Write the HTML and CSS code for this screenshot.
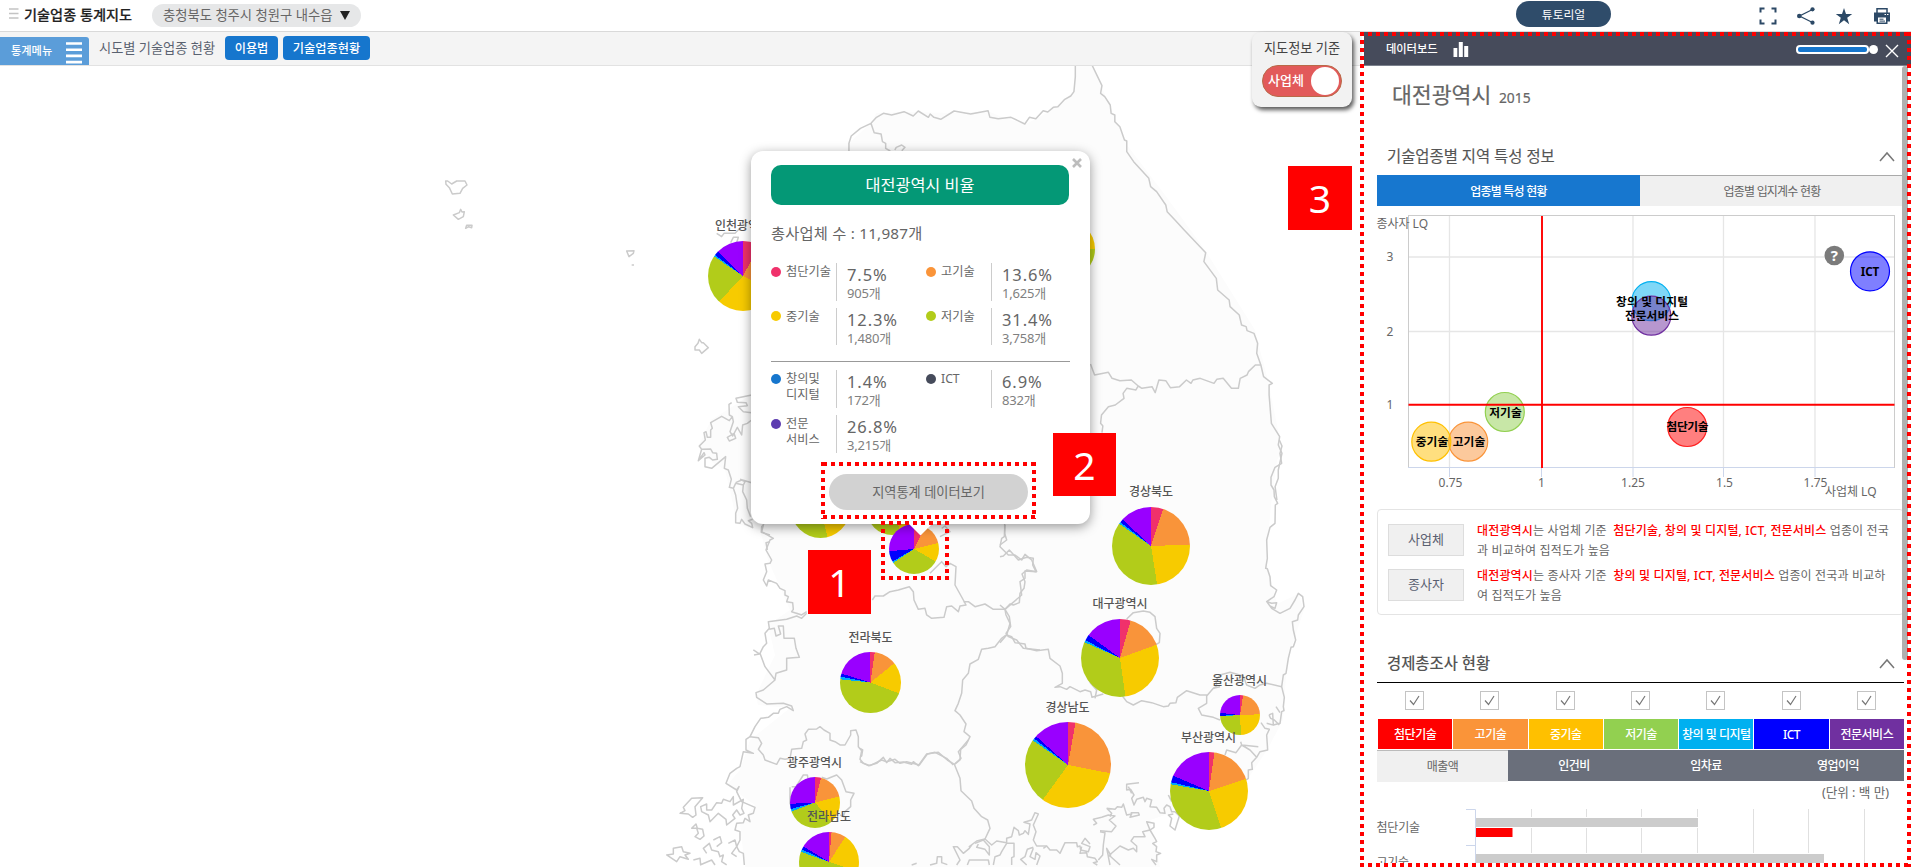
FILE: index.html
```html
<!DOCTYPE html>
<html lang="ko">
<head>
<meta charset="utf-8">
<title>기술업종 통계지도</title>
<link rel="stylesheet" href="styles.css">
</head>
<body>
<div class="app">
  <header class="topbar">
    <svg class="grip" width="10" height="12" viewBox="0 0 10 12"><path d="M0 1h9.500M0 5.500h9.500M0 10h9.500" stroke="#c4c4c4" stroke-width="1.600"/></svg>
    <h1 class="brand">기술업종 통계지도</h1>
    <div class="region-select"><span>충청북도 청주시 청원구 내수읍</span><svg width="10" height="9" viewBox="0 0 10 9"><path d="M0 0h10L5 9z" fill="#222"/></svg></div>
    <div class="tutorial">튜토리얼</div>
    <div class="tools">
      <svg width="18" height="18" viewBox="0 0 18 18"><path d="M1.500 5.500v-4h4M12.500 1.500h4v4M16.500 12.500v4h-4M5.500 16.500h-4v-4" fill="none" stroke="#2c4966" stroke-width="2"/></svg>
      <svg width="18" height="18" viewBox="0 0 18 18"><path d="M15.500 2.500L2.500 9l13 6.500" fill="none" stroke="#2c4966" stroke-width="1.300"/><circle cx="15.500" cy="2.300" r="2.100" fill="#2c4966"/><circle cx="2.300" cy="9" r="2.300" fill="#2c4966"/><circle cx="15.500" cy="15.700" r="2.100" fill="#2c4966"/></svg>
      <svg width="18" height="18" viewBox="0 0 18 18"><path d="M9 1l2 6h6.200l-5 3.800 2 6.400L9 13.200 3.800 17.200l2-6.400-5-3.800H7z" fill="#2c4966"/></svg>
      <svg width="18" height="18" viewBox="0 0 18 18"><path d="M4 6V1.700h10V6" fill="none" stroke="#2c4966" stroke-width="1.500"/><path d="M1 5.500h16V14.500h-2.500v2.500h-11v-2.500H1z" fill="#2c4966"/><path d="M5 10.500h8V15.500H5z" fill="#fff"/><path d="M6.500 12.200h4M6.500 14.100h5.500" stroke="#2c4966"/><path d="M11.500 7.500h1.500M14 7.500h1.500" stroke="#fff" stroke-width="1.200"/></svg>
    </div>
  </header>

  <div class="content">
    <main class="stage">
      <nav class="subbar">
        <div class="menu-tab"><span>통계메뉴</span><svg width="16" height="22" viewBox="0 0 16 22"><path d="M0 1.500h16M0 7.700h16M0 13.900h16M0 20.100h16" stroke="#fff" stroke-width="2.600"/></svg></div>
        <span class="crumb">시도별 기술업종 현황</span>
        <button class="btn b-guide">이용법</button><button class="btn b-status">기술업종현황</button>
      </nav>
      <div class="map">
        <svg class="land" width="1362" height="801" viewBox="0 66 1362 801">
          <path fill="#fcfcfc" d="M1075 66L1074 92 1049 112 1026 124 1004 118 988 111 954 113 910 112 876 113 871 123 849 143 849 300 800 390 750 395 735 405 711 420 698 447 712 462 725 470 730 490 737 524 760 530 768 560 790 610 768 625 775 655 756 695 758 705 790 708 750 740 740 770 727 785 755 805 740 825 745 867 1160 867 1150 820 1180 810 1247 780 1267 750 1283 720 1287 660 1304 610 1298 594 1277 604 1266 560 1271 505 1277 460 1282 450 1269 385 1255 330 1205 250 1165 195 1127 145 1103 90 1092 66z"/>
          <g class="coast" transform="translate(640 60) scale(.4592 .33333)">
            <path d="M948 17L948 50 945 95 938 108 925 118 910 140 900 142 888 156 878 152 862 176 848 172 838 192 808 172 780 176 762 172 758 152 720 162 684 153 655 178 640 172 632 162 628 172 606 153 595 168 575 155 548 165 530 160 515 172 503 190 480 205 460 228 455 250 455 275M503 190L510 218 525 222 528 245 535 250 535 265 545 273M555 270L558 262 570 255 577 262 570 272"/>
            <path d="M985 17L1006 77 1003 100 1012 110 1024 135 1026 160 1034 165 1034 185 1045 200 1055 240 1060 243 1060 275 1075 305 1108 355 1112 380 1125 395 1145 435 1148 455 1165 480 1185 510 1232 578 1228 605 1255 655 1258 690 1283 720 1285 740 1305 765 1310 795 1320 800 1322 812 1337 820 1345 850 1343 880 1352 915 1358 950 1377 970 1370 975 1370 1005 1375 1090 1393 1130 1390 1155 1398 1180 1390 1230 1390 1255 1383 1280 1387 1320"/>
            <path d="M981 912L990 945 1020 937 1028 955 1045 962 1070 960 1085 978 1080 990 1060 985 1052 1000 1054 1015 1035 1035 1020 1040 1005 1065 1003 1090 1008 1098 1006 1118M1085 978L1093 985 1115 980 1122 998 1130 960 1145 962 1155 983 1175 980 1190 960 1200 970 1204 960 1220 955 1250 970 1256 958 1270 955 1288 985 1303 985 1307 955 1322 945 1325 935 1340 915 1352 915"/>
          </g>
          <g class="coast" transform="translate(1000 440) scale(.33333)">
            <path d="M838 0L846 18 840 40 845 70 825 82 813 112 813 135 822 150 823 170 833 190 826 195 825 250 810 262 800 300 802 355 797 385 802 386 810 410 812 437 830 450 822 470 800 485 815 505 840 520 870 505 885 480 895 460 908 470 912 500 895 525 893 540 877 545 880 570 887 600 880 620 873 622 865 655 858 700 850 705 845 740 850 760 853 772 850 800 852 812 845 815 840 850 820 855 818 820 807 825M800 485L815 490 830 488 825 505 810 498M807 825L812 835 823 840 838 855M800 850L823 856"/>
            <path d="M14 250L14 280 20 300 0 315M0 350L10 348 28 330 55 360 80 352 100 355 98 375 108 395 80 390 66 402 75 425 72 445 60 460 58 488 40 495 30 492 15 508 18 525 30 550 20 585 0 608M0 495L15 508M20 585L35 590 45 608 75 612 78 625 110 632 145 628 150 655 180 678 187 700 187 730 165 742 180 740 200 748 210 740 240 755 255 750 272 755 276 772 310 762M365 765L380 785 400 795 425 782 455 788 490 800 505 798 510 790 528 788 532 772 560 752 600 765 620 765 620 790 595 805 605 825 640 832 660 840M620 768L640 745 650 738 648 720 660 705 690 697 730 708 740 735 765 745 780 735 800 730 845 740"/>
            <path d="M380 537L400 518 430 513 450 517 465 530 470 565 480 580 478 608 465 615M265 715L272 730 290 750 285 775"/>
            <path d="M660 740L640 745M783 848L795 865 808 868 800 885 803 930 780 935 770 952 750 930 725 915 722 905M675 945L680 930 708 938 725 915 775 920M770 952L755 968 757 988 745 990 745 1015 738 1020M828 800L840 818"/>
          </g>
          <g class="coast" transform="translate(860 740) scale(.33333)">
            <path d="M0 65L25 77 50 70 70 52 80 68 90 55 105 68 130 66 155 73 160 65 175 77 200 42 235 37 262 60 283 73 300 115 303 152 335 183 342 205 365 230 383 240 390 265 375 297M325 0L295 35 303 55 283 73M0 25L8 30 5 48 0 50"/>
            <path d="M155 375L170 370M210 375L230 370 232 350 245 350 245 368 262 374M290 375L300 360 280 320 292 320 310 340 328 325 335 315 328 320 350 303 375 297 395 315 410 303 440 308 440 295 455 290 462 262 475 272 478 285 490 280 495 272 505 283 510 252 492 247 515 240 525 218 535 222 520 255 528 275 520 300 530 318 560 318 570 330 590 330 600 340 615 308 650 308 652 320 660 318 662 330 685 335 690 320 665 310 675 295 690 312"/>
            <path d="M322 375L328 360 385 360 388 375M345 310L370 300 388 320 388 345 375 328 350 322 355 312M400 375L405 350 420 345 425 335 440 310 462 310 462 350 455 353 455 375M520 322L502 328 495 350 482 358 500 375M520 325L510 350 525 358 528 338 540 348 530 375M560 318L550 325"/>
            <path d="M665 320L660 340 680 338 682 350 705 355 712 365 700 368 712 375M720 275L735 278 730 315 728 345 715 360M750 375L745 350 752 345 740 325 745 348 780 318 805 330 820 325 830 335 830 318 813 303 822 290 855 290 848 275 870 270 860 245 882 250 882 262 870 270 885 295 890 305 878 310 890 320 888 335 902 340 890 345 890 365 875 358 888 375M750 348L780 375"/>
            <path d="M700 255L710 250 700 238 725 232 745 225 765 228 748 240 768 258 755 275 720 272M740 205L765 208 772 200 785 202 790 192 800 225 815 222 810 232 838 225 835 218 812 218M740 205L755 220 750 230"/>
            <path d="M837 128L800 133 800 150 812 148 822 165 815 175 822 195 830 178 850 172 855 185 860 175 875 180 870 200 890 202 900 218 915 220 912 205 920 195 930 200 935 215 945 215 958 228 945 270 930 258 935 235 925 225 940 222M925 165L935 185M805 140L815 160"/>
          </g>
          <g class="coast" transform="translate(640 500) scale(.33333)">
            <path d="M370 75L365 95 400 115 390 120 378 150 395 180 390 190 375 192 380 215 370 240 380 258 385 240 410 250 420 265 435 272 435 285 445 290 440 305 458 308 460 328 455 335 485 345 500 335M485 345L470 340M697 300L705 288 730 288 750 275 775 270 808 260 820 275 822 300 835 328 855 325 860 345 875 355 912 352 920 320 935 318 955 335 960 318 978 315 970 300 945 255 948 200 930 190 918 200 905 185 870 220M905 85L915 78 930 95 900 110M970 305L985 305 1005 320 1035 312 1060 328 1095 328M1095 75L1093 110 1085 115 1080 140 1090 150 1105 165 1125 165 1145 180 1155 163 1175 180 1190 215 1155 213 1155 235 1140 245 1145 285 1095 328 1108 350 1112 380 1098 400 1105 410 1130 420 1150 445 1200 450M1098 405L1085 415 1065 440 1045 445 1025 448 1015 478 990 492 985 520 968 540 965 580 955 610 945 632 960 645 978 672 972 695 990 710 978 735 962 748 960 780 945 792M940 795L920 775 885 757 862 762 838 795 800 785 780 790 765 778 740 785 725 780 690 797 670 790 660 778 665 752 655 740 655 710 648 690 632 692 632 705 615 735 600 735 585 725 570 720 570 700 552 690 540 680 530 687 505 688 495 702 500 720 490 725 485 745 455 748 450 775 435 778 420 775 410 793 375 780 370 765 355 748 365 730 355 713 330 710"/>
            <path d="M500 340L485 355 470 348 440 358 385 365 388 385 375 400 380 430 370 440 360 460 375 500 405 540 370 570 348 578 350 592 380 612 430 610 455 618 460 632 440 620 420 628 415 640 400 640 385 652 362 655 345 680 330 710 318 718 318 750 340 760 310 755 300 800 290 805 270 820 258 850 290 870 297 860 290 875 305 905 345 922 340 940 325 945 330 965 315 955 310 968 290 970 285 990 300 995 300 1020 290 1040 298 1055 310 1060 313 1095M388 388L403 385 408 408 422 402 415 378 430 378 432 415 463 415 468 445 478 472 440 475 440 510 408 520 405 538M340 450L358 462 342 465"/>
            <path d="M120 940L135 932 130 922 155 895 188 893 165 920 168 945 158 952 145 942zM185 935L182 920 200 912 200 930 215 930 230 908 245 910 250 898 270 905 280 890 280 915 310 898 305 925 312 940 300 945 290 930 278 945 285 955 260 975 258 958 235 940 210 965 205 945zM155 985L168 972 172 985 188 988 192 1008 180 1018 165 1010 175 1000 170 985zM80 1065L100 1062 100 1045 125 1040 130 1055 150 1060 135 1065 145 1078 120 1070 110 1085zM160 1080L180 1075 182 1095M200 1060L190 1045 208 1030 215 1050 235 1055 240 1070 250 1065 245 1085 260 1095M265 1030L285 1020 290 1040 275 1060 290 1070M180 1095L215 1080 225 1095M220 1020L240 1010 245 1028 230 1040"/>
            <path d="M450 862L450 910 458 925M455 860L468 860 490 825 502 825 505 840M545 832L560 837 590 825 605 840 618 875 642 880 632 900 632 920 615 935 610 950 600 945"/>
          </g>
          <g class="coast" transform="translate(690 380) scale(.33333)">
            <path d="M185 45L138 55 142 67 168 68 172 77 145 80 160 95 185 98M125 68L117 73 118 105 127 110 130 125 120 155 128 168 142 142 155 165 158 135 172 130 185 120M127 110L118 122 95 109 62 128 67 145 62 150 62 172 52 172 48 155 42 158 46 180 28 198 35 208 25 242 45 225 42 218 30 235M35 208L62 207 68 218 80 220 82 238 68 240 58 232 45 235 45 260 65 265 107 230 103 265 115 270 124 298 118 322 130 325 137 310 160 315 165 305 155 300 137 308M150 298L185 308M112 172L132 160 137 175 118 183zM130 325L137 345 143 385 137 400 137 428 150 430 155 418 165 432 188 443 185 430 175 422 188 418M160 315L158 335 170 360 172 385 182 410M222 432L215 440 214 457 240 465M240 485L228 488 232 510"/>
          </g>
          <g class="coast" transform="translate(420 150) scale(.33333)">
            <path d="M77 93L83 93 95 102 110 93 135 93 141 105 128 115 120 130 97 132 88 113 78 103zM100 195L118 188 122 178 126 186 133 185 130 200 115 208zM137 235L140 226 156 226 155 233 146 230zM620 303L642 302 640 310 627 320zM635 345H642M838 568L845 578 850 578 865 593 845 610 838 600 825 600 825 590 834 580zM890 250L905 260 912 250 945 250 960 235M932 278L940 262 955 262 950 278"/>
          </g>
        </svg>
        <div class="pie" style="--x:743px;--y:276px;--r:35px;--a:28deg;--b:118deg;--c:223deg;--d:304deg;--e:307deg;--f:314deg"></div>
        <div class="pie" style="--x:1065px;--y:249px;--r:30px;--a:8deg;--b:40deg;--c:90deg;--d:280deg;--e:283deg;--f:290deg"></div>
        <div class="pie" style="--x:820px;--y:508px;--r:29.500px;--a:8deg;--b:70deg;--c:166deg;--d:300deg;--e:303deg;--f:310deg"></div>
        <div class="pie" style="--x:892px;--y:510px;--r:25px;--a:8deg;--b:70deg;--c:158deg;--d:300deg;--e:303deg;--f:310deg"></div>
        <div class="pie" style="--x:914px;--y:548.500px;--r:25px;--a:27deg;--b:76deg;--c:120deg;--d:236deg;--e:240deg;--f:265deg"></div>
        <div class="pie" style="--x:1151px;--y:545.500px;--r:39px;--a:18deg;--b:88deg;--c:171deg;--d:305deg;--e:308deg;--f:313deg"></div>
        <div class="pie" style="--x:1120.200px;--y:657.700px;--r:39px;--a:16deg;--b:70deg;--c:172deg;--d:294deg;--e:297deg;--f:306deg"></div>
        <div class="pie" style="--x:1067.500px;--y:765.300px;--r:43px;--a:10deg;--b:101deg;--c:216deg;--d:305deg;--e:308deg;--f:312deg"></div>
        <div class="pie" style="--x:1239.500px;--y:715.300px;--r:20px;--a:9deg;--b:88deg;--c:177deg;--d:266deg;--e:268deg;--f:276deg"></div>
        <div class="pie" style="--x:1209px;--y:790.700px;--r:39px;--a:8deg;--b:72deg;--c:162deg;--d:280deg;--e:283deg;--f:293deg"></div>
        <div class="pie" style="--x:870.500px;--y:682.500px;--r:30.200px;--a:8deg;--b:51deg;--c:111deg;--d:276deg;--e:281deg;--f:287deg"></div>
        <div class="pie" style="--x:815px;--y:802.700px;--r:25.300px;--a:14deg;--b:76deg;--c:140deg;--d:249deg;--e:255deg;--f:267deg"></div>
        <div class="pie" style="--x:829px;--y:861.500px;--r:30px;--a:5deg;--b:33deg;--c:108deg;--d:290deg;--e:295deg;--f:301deg"></div>
        <span class="city" style="--x:742.500px;--y:226.300px">인천광역시</span>
        <span class="city" style="--x:1151px;--y:491.500px">경상북도</span>
        <span class="city" style="--x:1120px;--y:604px">대구광역시</span>
        <span class="city" style="--x:1239.500px;--y:680.500px">울산광역시</span>
        <span class="city" style="--x:1067.500px;--y:707.500px">경상남도</span>
        <span class="city" style="--x:1208.500px;--y:737.500px">부산광역시</span>
        <span class="city" style="--x:870.500px;--y:638px">전라북도</span>
        <span class="city" style="--x:814.500px;--y:763px">광주광역시</span>
        <span class="city" style="--x:829px;--y:817px">전라남도</span>

        <section class="popup">
          <div class="popup-title">대전광역시 비율</div>
          <svg class="popup-close" width="10" height="10" viewBox="0 0 10 10"><path d="M1 1l8 8M9 1L1 9" stroke="#bdbdbd" stroke-width="2.600"/></svg>
          <p class="total">총사업체 수 : 11,987개</p>
          <div class="stats">
            <div class="stat"><i class="c1"></i><b>첨단기술</b><div><strong>7.5%</strong><small>905개</small></div></div>
            <div class="stat"><i class="c2"></i><b>고기술</b><div><strong>13.6%</strong><small>1,625개</small></div></div>
            <div class="stat"><i class="c3"></i><b>중기술</b><div><strong>12.3%</strong><small>1,480개</small></div></div>
            <div class="stat"><i class="c4"></i><b>저기술</b><div><strong>31.4%</strong><small>3,758개</small></div></div>
          </div>
          <div class="stats second">
            <div class="stat"><i class="c5"></i><b>창의및<br>디지털</b><div><strong>1.4%</strong><small>172개</small></div></div>
            <div class="stat"><i class="c6"></i><b>ICT</b><div><strong>6.9%</strong><small>832개</small></div></div>
            <div class="stat"><i class="c7"></i><b>전문<br>서비스</b><div><strong>26.8%</strong><small>3,215개</small></div></div>
          </div>
          <button class="popup-btn">지역통계 데이터보기</button>
        </section>
        <div class="basis"><span>지도정보 기준</span><div class="toggle"><em>사업체</em><i></i></div></div>
      </div>
    </main>

    <aside class="board">
      <div class="board-head">
        <span>데이터보드</span>
        <svg width="16" height="15" viewBox="0 0 16 15"><path d="M.5 6h3.800v9H.5zM5.800 0h4v15h-4zM11.200 4h4v11h-4z" fill="#fff"/></svg>
        <div class="range"><i></i><b></b></div>
        <svg width="14" height="14" viewBox="0 0 14 14"><path d="M1 1l12 12M13 1L1 13" stroke="#fff" stroke-width="1.400"/></svg>
      </div>
      <div class="board-body">
        <h2 class="place">대전광역시 <small>2015</small></h2>
        <div class="sec-head s1"><h3>기술업종별 지역 특성 정보</h3><svg width="16" height="11" viewBox="0 0 16 11"><path d="M1 10l7-8 7 8" fill="none" stroke="#777" stroke-width="1.500"/></svg></div>
        <div class="tabs"><span class="on">업종별 특성 현황</span><span>업종별 입지계수 현황</span></div>
        <svg class="bubble" width="539" height="303" viewBox="1364 206 539 303">
          <path d="M1449.500 216v252M1633 216v252M1723.500 216v252M1815 216v252M1408 257h486M1408 331.500h486" stroke="#e6e6e6" stroke-width="1.300"/>
          <rect x="1408.500" y="215.500" width="486" height="252" fill="none" stroke="#ccc"/>
          <path d="M1408 467.500h486M1449.500 468v9M1541.500 468v9M1633 468v9M1723.500 468v9M1815 468v9" stroke="#ccd6eb"/>
          <g class="axis">
            <text x="1390" y="261" text-anchor="middle">3</text><text x="1390" y="335.500" text-anchor="middle">2</text><text x="1390" y="409" text-anchor="middle">1</text>
            <text x="1450.500" y="486.500" text-anchor="middle">0.75</text><text x="1541.500" y="486.500" text-anchor="middle">1</text><text x="1633" y="486.500" text-anchor="middle">1.25</text><text x="1724.500" y="486.500" text-anchor="middle">1.5</text><text x="1815.500" y="486.500" text-anchor="middle">1.75</text>
            <text x="1376.500" y="227.500" textLength="51.500">종사자 LQ</text><text x="1825" y="495.500" textLength="51.500">사업체 LQ</text>
          </g>
          <g stroke-width="1.200">
            <circle cx="1687.200" cy="427" r="19.500" fill="#ff000080" stroke="#f22"/>
            <circle cx="1468.200" cy="441.700" r="19.500" fill="#fa943980" stroke="#fa9439"/>
            <circle cx="1431.300" cy="441.700" r="19.500" fill="#ffc00080" stroke="#ffc000"/>
            <circle cx="1504.800" cy="412" r="19.500" fill="#92d05080" stroke="#92d050"/>
            <circle cx="1651.300" cy="301.200" r="19.500" fill="#00b0f080" stroke="#00b0f0"/>
            <circle cx="1870" cy="271.300" r="19.500" fill="#0000ff80" stroke="#00f"/>
            <circle cx="1651.300" cy="315.700" r="19.500" fill="#7030a080" stroke="#7030a0"/>
          </g>
          <path d="M1542 216v252M1408.500 404.700h486" stroke="#f00" stroke-width="1.900"/>
          <g class="dots">
            <text x="1687.500" y="431" textLength="42">첨단기술</text><text x="1469" y="445.700" textLength="32.500">고기술</text><text x="1432" y="445.700" textLength="32.500">중기술</text><text x="1505.500" y="416.500" textLength="32.500">저기술</text><text x="1652" y="305.500" textLength="72">창의 및 디지털</text><text x="1870" y="275.500" textLength="18.500">ICT</text><text x="1652" y="320" textLength="54">전문서비스</text>
          </g>
          <circle cx="1834.300" cy="255.500" r="9.800" fill="#7b7b7b"/><text class="help" x="1834.300" y="261">?</text>
        </svg>
        <div class="notes">
          <div class="note"><span>사업체</span><p><b>대전광역시</b>는 사업체 기준 &nbsp;<b>첨단기술, 창의 및 디지털, ICT, 전문서비스</b> 업종이 전국<br>과 비교하여 집적도가 높음</p></div>
          <div class="note"><span>종사자</span><p><b>대전광역시</b>는 종사자 기준 &nbsp;<b>창의 및 디지털, ICT, 전문서비스</b> 업종이 전국과 비교하<br>여 집적도가 높음</p></div>
        </div>
        <div class="sec-head s2"><h3>경제총조사 현황</h3><svg width="16" height="11" viewBox="0 0 16 11"><path d="M1 10l7-8 7 8" fill="none" stroke="#777" stroke-width="1.500"/></svg></div>
        <div class="legend">
          <div><svg class="ck"><use href="#ck"/></svg><span class="l1">첨단기술</span></div>
          <div><svg class="ck"><use href="#ck"/></svg><span class="l2">고기술</span></div>
          <div><svg class="ck"><use href="#ck"/></svg><span class="l3">중기술</span></div>
          <div><svg class="ck"><use href="#ck"/></svg><span class="l4">저기술</span></div>
          <div><svg class="ck"><use href="#ck"/></svg><span class="l5">창의 및 디지털</span></div>
          <div><svg class="ck"><use href="#ck"/></svg><span class="l6">ICT</span></div>
          <div><svg class="ck"><use href="#ck"/></svg><span class="l7">전문서비스</span></div>
        </div>
        <div class="metrics"><span class="on">매출액</span><span>인건비</span><span>임차료</span><span>영업이익</span></div>
        <p class="unit">(단위 : 백 만)</p>
        <svg class="bars" width="539" height="64" viewBox="1364 803 539 64">
          <path d="M1531.500 809v58M1586.500 809v58M1641.500 809v58M1697.500 809v58M1753.500 809v58M1808.500 809v58M1864.500 809v58" stroke="#e0e0e0"/>
          <path d="M1466 809.500h9.500V867M1466 845.500h9.500" fill="none" stroke="#ccd6eb"/>
          <path d="M1476 817h222v11h-222zM1476 853h349v11h-349z" fill="#fff"/>
          <path d="M1476 818h222v9h-222zM1476 854h348v9h-348z" fill="#ccc"/><path d="M1476 828h36.500v9h-36.500z" fill="#f00"/>
          <text x="1376.500" y="831.500" textLength="43.500">첨단기술</text><text x="1376.500" y="867" textLength="32.500">고기술</text>
        </svg>
      </div>
      <i class="scroll"></i>
    </aside>
  </div>

  <svg class="marks" width="1911" height="867" viewBox="0 0 1911 867">
    <defs><g id="ck"><rect x=".5" y=".5" width="18" height="18" fill="#fff" stroke="#c4c4c4"/><path d="M5 9.500l3.500 4 5.500-8.500" fill="none" stroke="#777" stroke-width="1.200"/></g></defs>
    <path d="M1364 863H1907V867H1364z" fill="#fff"/>
    <g fill="none" stroke="#f00" stroke-width="4" stroke-dasharray="4 4">
      <path d="M1360 865H1911M1360 34H1911M1362 32V867M1909 32V867"/>
      <path d="M823 464H1036M823 517H1036M823 462V519M1034 462V519"/>
      <path d="M881 523H949M881 578H949M883 521V580M947 521V580"/>
    </g>
  </svg>
  <div class="step n1">1</div><div class="step n2">2</div><div class="step n3">3</div>
</div>
</body>
</html>
```
FILE: styles.css
```css
* { box-sizing: border-box; }
body { margin: 0; font-family: "Noto Sans", "Noto Sans CJK KR", sans-serif; color: #666; background: #fff; }
h1, h2, h3, p { margin: 0; font-weight: 400; }
button { border: 0; font-family: inherit; padding: 0; }
i, em { font-style: normal; }
.app { position: relative; width: 1911px; height: 867px; overflow: hidden; display: flex; flex-direction: column; }

.topbar { display: flex; height: 32px; flex: none; border-bottom: 1px solid #d9d9d9; background: #fff; }
.grip { margin: 8px 5px 0 9px; }
.brand { width: 128px; font-size: 14.2px; font-weight: 500; color: #222; line-height: 29px; white-space: nowrap; -webkit-text-stroke: .2px #222; }
.region-select { display: flex; align-items: center; gap: 8px; width: 209px; height: 23px; margin-top: 4px; padding-left: 11px; border-radius: 12px; background: #e6e7e8; font-size: 13.3px; line-height: 23px; color: #666; white-space: nowrap; }
.tutorial { width: 95px; height: 26px; margin: 1px 0 0 1155px; border-radius: 13px; background: #2f4c6a; color: #fff; font-size: 11.8px; line-height: 26px; text-align: center; }
.tools { display: flex; gap: 20px; margin: 7px 0 0 148px; }

.content { display: flex; flex: 1; min-height: 0; }
.stage { width: 1362px; display: flex; flex-direction: column; position: relative; }
.subbar { display: flex; height: 34px; flex: none; background: #f4f4f4; border-bottom: 1px solid #e2e2e2; white-space: nowrap; }
.menu-tab { display: flex; gap: 14px; width: 89px; height: 28px; margin-top: 5px; padding: 5px 0 0 11px; border-radius: 0 3px 0 0; background: #5b9dd9; color: #fff; font-size: 11.200px; font-weight: 500; line-height: 18px; }
.menu-tab span { width: 41px; }
.crumb { width: 126px; margin-left: 10px; font-size: 13.2px; line-height: 32px; color: #5a6270; }
.btn { height: 24px; margin-top: 4px; border-radius: 4px; background: #1676cd; color: #fff; font-size: 12.2px; font-weight: 500; line-height: 23px; }
.b-guide { width: 53px; margin-right: 5px; }
.b-status { width: 87px; }

.map { position: relative; flex: 1; }
.land { display: block; }
.coast path { fill: none; stroke: #cbcbcb; stroke-width: 1.5; vector-effect: non-scaling-stroke; stroke-linejoin: round; }
.pie { position: absolute; left: calc(var(--x) - var(--r)); top: calc(var(--y) - 66px - var(--r)); width: calc(var(--r) * 2); height: calc(var(--r) * 2); border-radius: 50%;
  background: conic-gradient(#f0316b var(--a), #f9943a 0 var(--b), #f7cb00 0 var(--c), #b2cc1a 0 var(--d), #00a8f8 0 var(--e), #00f 0 var(--f), #90f 0); }
.city { position: absolute; left: var(--x); top: calc(var(--y) - 66px); transform: translate(-50%, -50%); font-size: 12px; line-height: 16px; font-weight: 500; color: #555; white-space: nowrap; }

.popup { position: absolute; left: 751px; top: 85px; width: 339px; height: 373px; padding: 14px 20px; border-radius: 12px; background: #fff; box-shadow: 0 3px 12px rgba(0,0,0,.4); }
.popup::after { content: ""; position: absolute; left: 161px; top: 364px; width: 17px; height: 17px; background: #fff; transform: rotate(45deg); }
.popup-title { width: 298px; height: 40px; border-radius: 10px; background: #049876; color: #fff; font-size: 16.3px; line-height: 40px; text-align: center; }
.popup-close { position: absolute; left: 321px; top: 7px; }
.total { margin-top: 16px; height: 25px; font-size: 15.3px; line-height: 24px; letter-spacing: .2px; white-space: nowrap; }
.stats { display: grid; grid-template-columns: 155px 144px; row-gap: 7px; width: 299px; margin-top: 17px; padding-bottom: 16px; border-bottom: 1px solid #999; }
.stats.second { margin-top: 8px; padding: 0; border: 0; }
.stat { display: flex; height: 37.7px; }
.stat i { width: 10px; height: 10px; margin: 3.500px 5px 0 0; border-radius: 50%; }
.stat b { width: 50px; font-size: 12.2px; line-height: 16px; font-weight: 400; white-space: nowrap; padding-top: 1px; }
.stat div { display: flex; flex-direction: column; padding-left: 10px; border-left: 1px solid #ccc; }
.stat strong { font-size: 16.500px; line-height: 23px; font-weight: 400; letter-spacing: .9px; }
.stat small { font-size: 13px; line-height: 15px; letter-spacing: -.2px; color: #808080; }
.c1 { background: #f0316b; } .c2 { background: #fa9439; } .c3 { background: #f7cb00; } .c4 { background: #b2cc1a; }
.c5 { background: #1676cd; } .c6 { background: #464b5b; } .c7 { background: #5d3cb0; }
.popup-btn { position: absolute; left: 78px; top: 323px; width: 199px; height: 36px; border-radius: 18px; background: #d2d2d2; color: #666; font-size: 13.2px; line-height: 34px; }

.basis { position: absolute; left: 1252px; top: -34px; width: 100px; height: 75px; padding: 7px 10px; border-radius: 9px; background: #f2f2f2; box-shadow: 2px 3px 4px rgba(0,0,0,.65); font-size: 13.2px; line-height: 18px; color: #444; text-align: center; white-space: nowrap; }
.toggle { display: flex; justify-content: space-between; width: 80px; height: 32px; margin-top: 8px; padding: 1px 2px 0 5px; border: 1px solid #b96a48; border-radius: 16px; background: #e25a5a; color: #fff; }
.toggle em { font-size: 13px; font-weight: 500; line-height: 27px; }
.toggle i { width: 28px; height: 28px; border-radius: 50%; background: #fff; }

.board { position: relative; width: 549px; padding-left: 2px; background: #fff; overflow: hidden; }
.board-head { display: flex; height: 34px; padding-left: 22px; background: #464b5b; border-bottom: 1px solid #7b818d; color: #fff; }
.board-head > span { width: 67px; font-size: 11.3px; font-weight: 500; line-height: 33px; letter-spacing: -.1px; }
.board-head > svg { margin-top: 10px; }
.board-head > svg:last-child { margin: 12px 0 0 7px; }
.range { display: flex; align-items: center; width: 82px; height: 10px; margin: 12px 0 0 327px; }
.range i { width: 73px; height: 9px; border: 2px solid #fff; border-radius: 4px; background: #1676cd; }
.range b { width: 9px; height: 9px; border-radius: 50%; background: #fff; }
.board-body { width: 540px; }
.place { padding: 14px 0 0 28px; height: 74px; font-size: 21.600px; line-height: 30px; white-space: nowrap; -webkit-text-stroke: .2px #666; }
.place small { font-size: 13.8px; margin-left: 2px; }
.sec-head { display: flex; justify-content: space-between; padding: 0 9px 0 10px; margin-left: 13px; white-space: nowrap; }
.sec-head h3 { font-size: 15.400px; line-height: 25px; color: #555; }
.sec-head svg { margin-top: 7px; }
.s1 { height: 35px; padding-top: 4px; }
.s1 h3 { -webkit-text-stroke: .15px #555; }
.tabs { display: flex; margin-left: 13px; height: 31px; }
.tabs span { width: 264px; background: #f0f0f0; border-top: 1px solid #aaa; font-size: 12px; line-height: 31px; letter-spacing: -.8px; text-align: center; }
.tabs .on { width: 263px; background: #1777cf; border-color: #1777cf; color: #fff; font-weight: 500; }
.bubble, .bars { display: block; }
.axis text, .bars text { font-size: 12px; fill: #666; }
.dots text { font-size: 11.7px; font-weight: 700; fill: #000; text-anchor: middle; }
.help { font-size: 15px; font-weight: 700; fill: #fff; text-anchor: middle; }
.notes { display: flex; flex-direction: column; gap: 5px; height: 106px; margin-left: 13px; padding: 11px 10px; border: 1px solid #e4e4e4; border-radius: 4px; }
.note { display: flex; height: 40px; }
.note span { width: 76px; height: 32px; margin: 3px 13px 0 0; border: 1px solid #ddd; background: #f0f0f0; font-size: 13px; line-height: 29px; text-align: center; flex: none; color: #5a6070; }
.note p { font-size: 12px; line-height: 20px; letter-spacing: .16px; white-space: nowrap; }
.note b { color: #f00; font-weight: 500; }
.s2 { height: 68px; padding-top: 36px; border-bottom: 1.500px solid #000; }
.s2 h3 { font-weight: 500; }
.legend { display: grid; grid-template-columns: repeat(7, 1fr); margin-left: 13px; }
.legend div { display: flex; flex-direction: column; align-items: center; padding-top: 8px; }
.ck { width: 19px; height: 19px; margin-bottom: 9px; }
.legend span { align-self: stretch; height: 30px; margin: 0 0 1px 1px; color: #fff; font-size: 12px; font-weight: 500; line-height: 31px; text-align: center; letter-spacing: -.5px; white-space: nowrap; }
.l1 { background: #f00; } .l2 { background: #fa9439; } .l3 { background: #ffc000; } .l4 { background: #92d050; }
.l5 { background: #00b0f0; } .l6 { background: #00f; } .l7 { background: #7030a0; }
.metrics { display: grid; grid-template-columns: 131px 1fr 1fr 1fr; margin-left: 13px; height: 31px; background: #6a6f7b; color: #fff; font-size: 12px; font-weight: 500; line-height: 32px; text-align: center; letter-spacing: -.5px; }
.metrics .on { background: #f0f0f0; border-top: 1px solid #bbb; color: #666; font-weight: 400; line-height: 31px; }
.unit { height: 22px; padding-right: 15px; font-size: 12.600px; line-height: 23px; text-align: right; }
.scroll { position: absolute; left: 540px; top: 34px; width: 6px; height: 594px; border-radius: 3px; background: #b0b0b0; }

.marks { position: absolute; left: 0; top: 0; pointer-events: none; }
.step { position: absolute; width: 63px; height: 64px; background: #f00; color: #fff; font-size: 39px; line-height: 63px; text-align: center; }
.n1 { left: 808px; top: 550px; }
.n2 { left: 1053px; top: 433px; width: 63px; height: 63px; }
.n3 { left: 1288px; top: 166px; width: 64px; }
```
